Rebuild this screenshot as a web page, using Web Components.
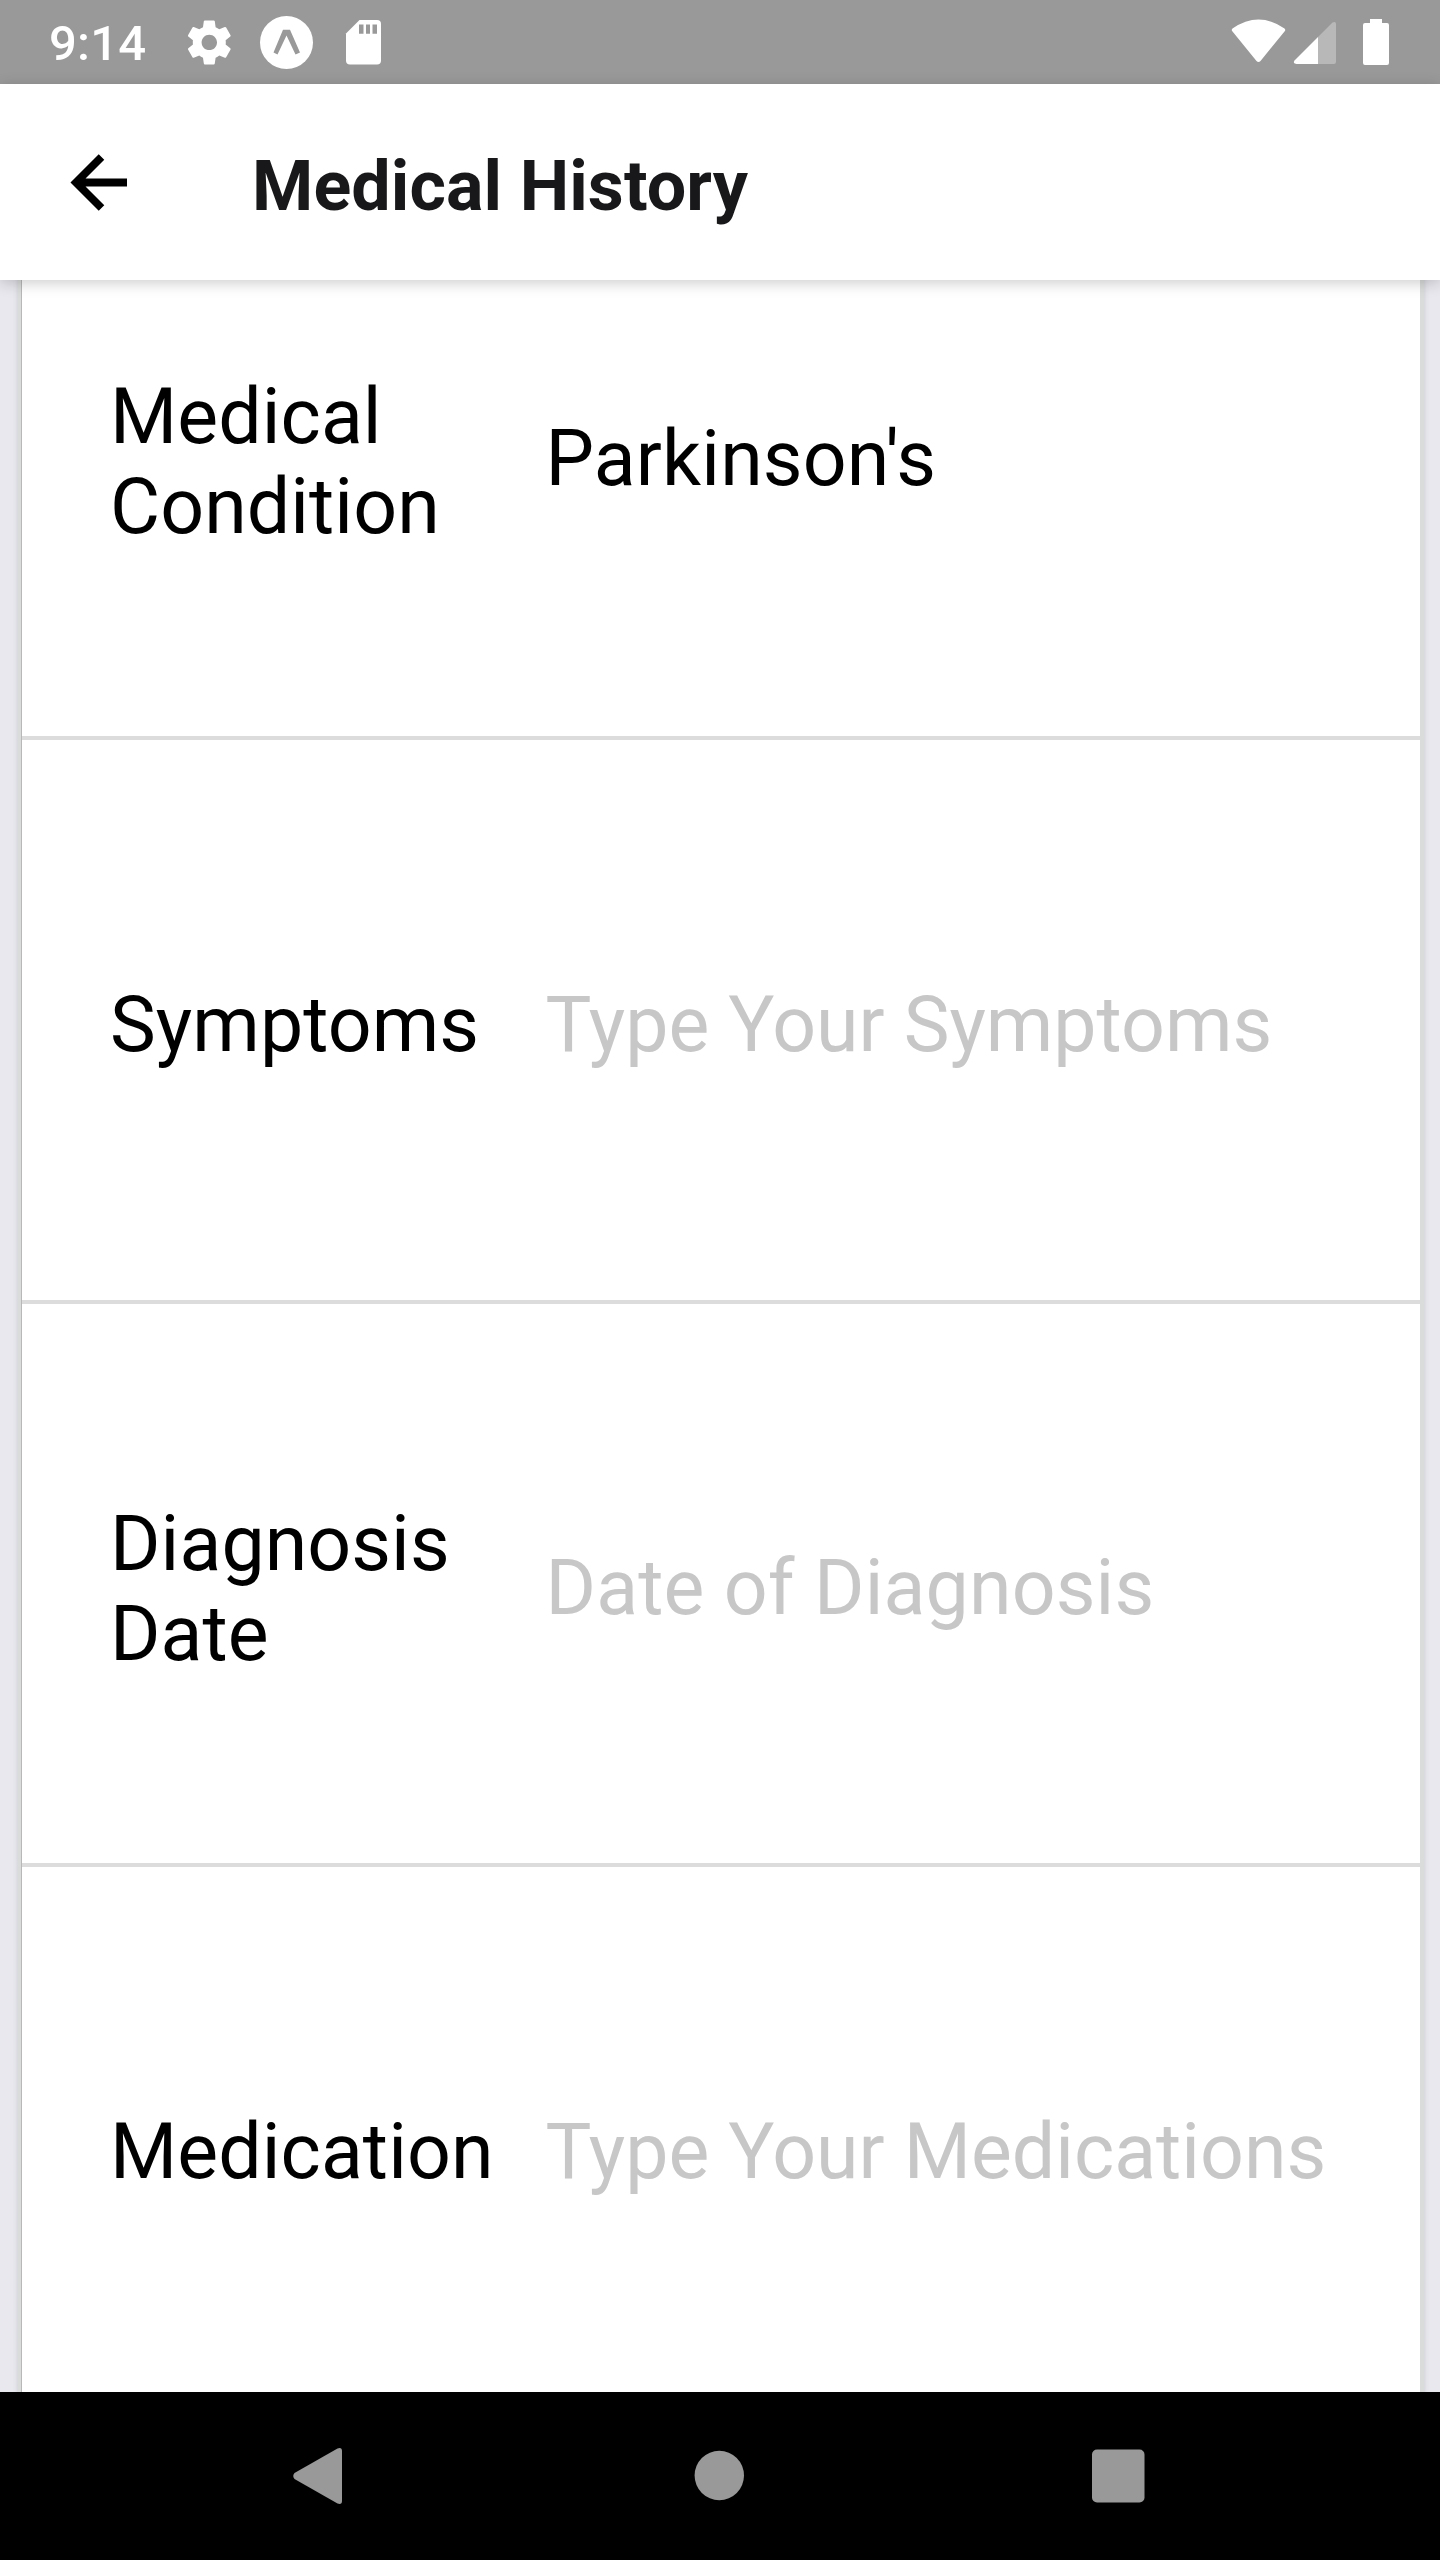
<!DOCTYPE html>
<html lang="en">
<head>
<meta charset="utf-8">
<title>Medical History</title>
<style>
html,body{margin:0;height:2560px;overflow:hidden}
body{font-family:Roboto,"Liberation Sans",sans-serif;background:#fff}
</style>
</head>
<body>
<history-screen></history-screen>
<script>
const define=(name,html)=>customElements.define(name,class extends HTMLElement{
  constructor(){super();this.attachShadow({mode:'open'}).innerHTML=html;}
});

define('status-bar',`<style>
:host{display:flex;box-sizing:border-box;height:84px;background:#999;color:#fff;align-items:flex-start;justify-content:space-between;flex:none}
.l,.r{display:flex}
.l{padding-left:49px}
time{font-size:49px;font-weight:500;line-height:84px;width:133px;margin-top:2px;letter-spacing:.2px;white-space:nowrap}
svg{display:block}
</style>
<div class="l"><time>9:14</time>
<svg width="220" height="84" viewBox="182 0 220 84" fill="#fff">
<path transform="translate(182.9 16) scale(2.2)" d="M19.43 12.98c.04-.32.07-.64.07-.98s-.03-.66-.07-.98l2.11-1.65c.19-.15.24-.42.12-.64l-2-3.46c-.12-.22-.39-.3-.61-.22l-2.49 1c-.52-.4-1.08-.73-1.69-.98l-.38-2.65C14.46 2.18 14.25 2 14 2h-4c-.25 0-.46.18-.49.42l-.38 2.65c-.61.25-1.17.59-1.69.98l-2.49-1c-.23-.09-.49 0-.61.22l-2 3.46c-.13.22-.07.49.12.64l2.11 1.65c-.04.32-.07.65-.07.98s.03.66.07.98l-2.11 1.65c-.19.15-.24.42-.12.64l2 3.46c.12.22.39.3.61.22l2.49-1c.52.4 1.08.73 1.69.98l.38 2.65c.03.24.24.42.49.42h4c.25 0 .46-.18.49-.42l.38-2.65c.61-.25 1.17-.59 1.69-.98l2.49 1c.23.09.49 0 .61-.22l2-3.46c.12-.22.07-.49-.12-.64l-2.11-1.65zM12 15.5c-1.93 0-3.5-1.57-3.5-3.5s1.57-3.5 3.5-3.5 3.5 1.57 3.5 3.5-1.57 3.5-3.5 3.5z"/>
<circle cx="286.5" cy="42.5" r="26.5"/>
<path fill="#999" d="M283 29.7h7L300 52.5L295.5 54.5L286.5 35.5L277.500 54.500L273.500 52.500Z"/>
<path d="M359.500 20H377Q381 20 381 24V60.500Q381 64.500 377 64.500H350Q346 64.500 346 60.500V33.500Z"/>
<path fill="#999" d="M359 24.500h4.500v9.200H359zM366 24.500h4v9.200h-4zM372.500 24.500h4.500v9.200h-4.500z"/>
</svg></div>
<div class="r"><svg width="240" height="84" viewBox="0 0 240 84" fill="#fff">
<path d="M32.500 28.500Q58.500 10.500 84.500 28.500Q86 30 84.500 31.500L60.500 61Q58.500 63 56.500 61L32.500 31.500Q31 30 32.500 28.500Z"/>
<path fill="#b8b8b8" d="M118 37L132.500 22.500Q136 21 136 24V62Q136 64 134 64H118Z"/>
<path d="M118 37V64H96.500Q92.500 63.500 94.500 60.500Z"/>
<path d="M170 19h12v4h5q2 0 2 2V63q0 2-2 2h-22q-2 0-2-2V25q0-2 2-2h5z"/>
</svg></div>`);

define('app-header',`<style>
:host{display:flex;align-items:center;box-sizing:border-box;height:196px;flex:none;background:#fff;z-index:1;box-shadow:0 3px 14px rgba(0,0,0,.2)}
svg{display:block;flex:none;width:252px;height:196px}
h1{margin:7px 0 0;font-size:70px;line-height:82px;font-weight:700;letter-spacing:.1px;color:#18181a;white-space:nowrap}
</style>
<svg viewBox="0 0 252 196"><path fill="none" stroke="#000" stroke-width="7.800" d="M127 98.500H76M101.500 73L76 98.500L101.500 124"/></svg>
<h1><slot></slot></h1>`);

define('form-row',`<style>
:host{display:flex;align-items:center;box-sizing:border-box;height:563.500px;flex:none;border-bottom:4px solid #dcdcdc;padding:10px 0 0 88px;font-size:77px;line-height:90px;color:#000}
.label{width:435.500px;flex:none;padding-top:var(--label-shift,0);letter-spacing:.08px}
.value{color:var(--value,#c7c7c7);white-space:nowrap;letter-spacing:var(--tracking,0);padding-bottom:var(--value-lift,0)}
</style>
<div class="label"><slot name="label"></slot></div><div class="value"><slot></slot></div>`);

define('nav-bar',`<style>
:host{display:block;height:168px;flex:none;background:#000}svg{display:block}
</style>
<svg width="1440" height="168" viewBox="0 2392 1440 168" fill="#999">
<path d="M294.500 2473L337.500 2448.500Q342 2447 342 2451V2501Q342 2505 337.500 2503.500L294.500 2479Q292 2476 294.500 2473Z"/>
<circle cx="719.300" cy="2475.500" r="24.700"/>
<rect x="1092" y="2449.500" width="52.500" height="53" rx="5"/>
</svg>`);

define('history-screen',`<style>
:host{display:flex;flex-direction:column;width:1440px;height:2560px;overflow:hidden}
main{flex:1;min-height:0;overflow:hidden;background:#e9e8ef;display:flex;padding:0 20px 0 22px}
section{flex:1;display:flex;flex-direction:column;justify-content:flex-start;background:#fff;box-shadow:-1px 0 0 #b8b8b8,0 0 0 4px #dadbdb,0 0 5px 4px #c8c8ce}
form-row:first-child{margin-top:-103.500px}
.two{--label-shift:2px;--tracking:.15px}
.filled{--value:#000;--value-lift:5px}
</style>
<status-bar></status-bar>
<app-header>Medical History</app-header>
<main><section>
<form-row class="two filled"><span slot="label">Medical<br>Condition</span>Parkinson's</form-row>
<form-row><span slot="label">Symptoms</span>Type Your Symptoms</form-row>
<form-row class="two"><span slot="label">Diagnosis<br>Date</span>Date of Diagnosis</form-row>
<form-row><span slot="label">Medication</span>Type Your Medications</form-row>
</section></main>
<nav-bar></nav-bar>`);
</script>
</body>
</html>
